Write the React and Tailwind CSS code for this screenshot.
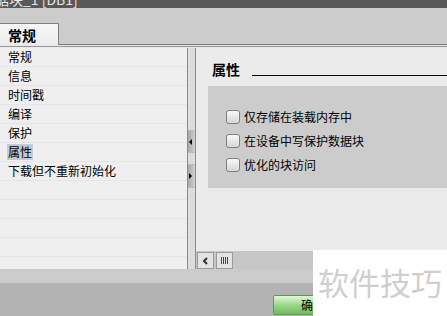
import React from 'react';

// left navigation rows
const navItems = ['常规', '信息', '时间戳', '编译', '保护', '属性', '下载但不重新初始化', '', '', '', '', ''];

const options = ['仅存储在装载内存中', '在设备中写保护数据块', '优化的块访问'];

const font = { fontFamily: '"Noto Sans CJK SC", "Noto Sans", sans-serif' };

const Checkbox = () => (
  <div className="w-[14px] h-[14px] rounded-[3px] border border-[#7f7f7f] bg-gradient-to-b from-[#fafafa] to-[#d6d6d6] shrink-0" />
);

export default function App() {
  return (
    <div className="relative w-[447px] h-[316px] overflow-hidden bg-[#b3b3b3] flex flex-col font-['Noto_Sans_CJK_SC',sans-serif]">
      {/* title bar, mostly cut off */}
      <div className="h-[8px] bg-[#585858] overflow-hidden shrink-0">
        <div className="-mt-[10px] -ml-[5px] text-[14px] leading-[18px] text-[#e6e6e6] whitespace-nowrap">据块_1 [DB1]</div>
      </div>

      {/* tab strip */}
      <div className="h-[37px] bg-[#cccccc] flex items-end shrink-0 border-b border-[#7a7a7a]">
        <div className="w-[59px] h-[22px] -mb-[1px] bg-gradient-to-b from-[#f7f7f7] to-[#ececec] border-t border-r border-[#808080] flex items-center pl-[8px] text-[14px] font-bold text-black leading-none">
          常规
        </div>
      </div>
      <div className="h-[1px] bg-[#e6e6e6] shrink-0" />
      <div className="h-[1px] bg-[#9a9a9a] shrink-0" />
      <div className="h-[1px] bg-[#e9e9e9] shrink-0" />

      {/* main area */}
      <div className="h-[221px] flex shrink-0">
        {/* nav list */}
        <div className="w-[187px] bg-[#efefef] flex flex-col overflow-hidden">
          {navItems.map((item, i) => (
            <div key={i} className="h-[19px] shrink-0 border-b border-[#e5e5e5] flex items-center pl-[7px] text-[12px] leading-none text-black">
              {item && (
                <span className={`px-[1px] py-[2px] ${item === '属性' ? 'bg-[#c3cbd4]' : ''}`}>{item}</span>
              )}
            </div>
          ))}
        </div>

        {/* splitter */}
        <div className="w-[9px] border-l border-r border-[#8c8c8c] bg-[#dcdcdc] flex flex-col items-center">
          <div className="mt-[82px] w-[7px] h-[23px] bg-gradient-to-r from-[#a8a8a8] to-[#d0d0d0] border-y border-[#bdbdbd] flex items-center justify-start">
            <span className="block w-0 h-0 border-y-[3px] border-y-transparent border-r-[3px] border-r-black ml-[1px]" />
          </div>
          <div className="mt-[11px] w-[7px] h-[24px] bg-gradient-to-r from-[#a8a8a8] to-[#d0d0d0] border-y border-[#bdbdbd] flex items-center justify-start">
            <span className="block w-0 h-0 border-y-[3px] border-y-transparent border-l-[3px] border-l-black ml-[1px]" />
          </div>
        </div>

        {/* properties panel */}
        <div className="flex-1 bg-[#ebebeb] flex flex-col">
          <div className="flex-1 pt-[12px] pl-[12px]">
            <div className="flex items-end pl-[4px] h-[16px]">
              <span className="text-[14px] font-bold leading-none text-black">属性</span>
              <div className="flex-1 ml-[12px] h-[1px] bg-black" />
            </div>
            <div className="mt-[10px] h-[102px] bg-[#cccccc] pt-[24px] pl-[18px] flex flex-col gap-[10px]">
              {options.map((o) => (
                <div key={o} className="flex items-center gap-[4px] h-[14px]">
                  <Checkbox />
                  <span className="text-[12px] leading-none text-black">{o}</span>
                </div>
              ))}
            </div>
          </div>
          {/* horizontal scrollbar */}
          <div className="h-[18px] bg-[#c6c6c6] flex items-start gap-[2px] pl-[1px] pt-[1px]">
            <div className="w-[17px] h-[17px] bg-[#e3e3e3] border border-[#9a9a9a] flex items-center justify-center">
              <svg width="7" height="8" viewBox="0 0 7 8">
                <path d="M5 1 L2 4 L5 7" stroke="#333" strokeWidth="2" fill="none" />
              </svg>
            </div>
            <div className="w-[17px] h-[17px] bg-[#e3e3e3] border border-[#9a9a9a] flex items-center justify-center gap-[1px]">
              <span className="w-[1px] h-[7px] bg-[#444]" />
              <span className="w-[1px] h-[7px] bg-[#444]" />
              <span className="w-[1px] h-[7px] bg-[#444]" />
              <span className="w-[1px] h-[7px] bg-[#444]" />
            </div>
          </div>
        </div>
      </div>

      {/* lower bands */}
      <div className="h-[14px] bg-[#cbcbcb] shrink-0" />
      <div className="flex-1 bg-[#b3b3b3] pt-[12px] pl-[273px]">
        <div className="w-[80px] h-[20px] rounded-[2px] border border-[#5f9a50] bg-gradient-to-b from-[#e2f7da] via-[#9ad88a] to-[#6cbd5c] flex items-center justify-center text-[12px] leading-none text-black">
          确定
        </div>
      </div>

      {/* watermark overlay */}
      <div className="absolute left-[313px] top-[250px] w-[134px] h-[66px] bg-white pl-[5px] pt-[16px]">
        <span className="text-[31px] leading-none text-[#cfcfcf] whitespace-nowrap" style={font}>软件技巧</span>
      </div>
    </div>
  );
}
